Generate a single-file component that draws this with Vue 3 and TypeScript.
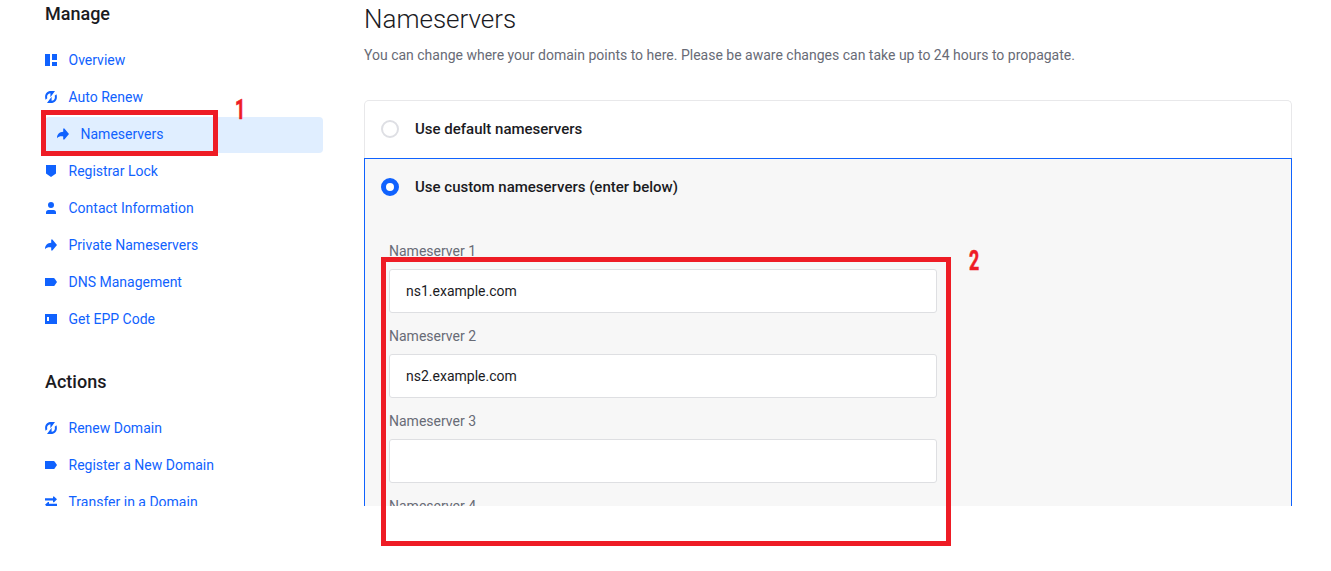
<script setup lang="ts">
type IconName = 'overview' | 'renew' | 'share' | 'shield' | 'person' | 'tag' | 'code' | 'transfer'

interface NavItem {
  label: string
  icon: IconName
  active?: boolean
}

interface NavSection {
  title: string
  items: NavItem[]
}

const icons: Record<IconName, string> = {
  overview: 'M0 0H5V12H0ZM7 0H12V6H7ZM7 8H12V12H7Z',
  renew:
    'M.6 8.7C-.9 4.6 1.2 .4 5 0H10L5.4 6.2V2.2C2.7 2.6 1.6 4.8 2.3 7.3ZM11.4 3.3C12.9 7.4 10.8 11.6 7 12H2L6.6 5.8V9.8C9.3 9.4 10.4 7.2 9.7 4.7Z',
  share: 'M6.2 .6H7.4L12 6L7.4 11.4H6.2V8.4C3.4 8 1.5 8.6 0 10.2C0 6.3 2.5 3.9 6.2 3.7Z',
  shield: 'M1 0H11V8.4L6 12L1 8.4Z',
  person: 'M6 0A3 3 0 1 1 6 6A3 3 0 1 1 6 0ZM3.5 8H8.5Q11 8 11 10.5V12H1V10.5Q1 8 3.5 8Z',
  tag: 'M0 2H8.6Q9.2 2 9.6 2.5L12 6L9.6 9.5Q9.2 10 8.6 10H0Z',
  code: 'M0 1H12V11H0ZM2 4V8H4V4Z',
  transfer: 'M0 2.3H8V.5H9L12 3.3L9 6.2H8V4.5H0ZM12 7.7H4V6H3L0 8.8L3 11.6H4V9.9H12Z',
}

const sections: NavSection[] = [
  {
    title: 'Manage',
    items: [
      { label: 'Overview', icon: 'overview' },
      { label: 'Auto Renew', icon: 'renew' },
      { label: 'Nameservers', icon: 'share', active: true },
      { label: 'Registrar Lock', icon: 'shield' },
      { label: 'Contact Information', icon: 'person' },
      { label: 'Private Nameservers', icon: 'share' },
      { label: 'DNS Management', icon: 'tag' },
      { label: 'Get EPP Code', icon: 'code' },
    ],
  },
  {
    title: 'Actions',
    items: [
      { label: 'Renew Domain', icon: 'renew' },
      { label: 'Register a New Domain', icon: 'tag' },
      { label: 'Transfer in a Domain', icon: 'transfer' },
    ],
  },
]

const fields = [
  { label: 'Nameserver 1', value: 'ns1.example.com' },
  { label: 'Nameserver 2', value: 'ns2.example.com' },
  { label: 'Nameserver 3', value: '' },
  { label: 'Nameserver 4', value: '' },
]
</script>

<template>
  <div class="canvas">
    <div class="page">
      <aside class="sidebar">
        <section v-for="section in sections" :key="section.title" class="section">
          <h2>{{ section.title }}</h2>
          <nav>
            <a v-for="item in section.items" :key="item.label" class="item" :class="{ active: item.active }">
              <svg class="icon" viewBox="0 0 12 12" aria-hidden="true">
                <path :d="icons[item.icon]" :fill-rule="item.icon === 'code' ? 'evenodd' : 'nonzero'" />
              </svg>
              <span>{{ item.label }}</span>
            </a>
          </nav>
        </section>
      </aside>

      <main class="main">
        <h1>Nameservers</h1>
        <p class="intro">
          You can change where your domain points to here. Please be aware changes can take up to 24 hours to propagate.
        </p>
        <div class="option first">
          <span class="radio"></span>
          <span class="option-label">Use default nameservers</span>
        </div>
        <div class="custom">
          <div class="option">
            <span class="radio checked"></span>
            <span class="option-label">Use custom nameservers (enter below)</span>
          </div>
          <div class="fields">
            <div v-for="field in fields" :key="field.label" class="field">
              <label>{{ field.label }}</label>
              <input type="text" :value="field.value" />
            </div>
          </div>
        </div>
      </main>
    </div>

    <div class="mark mark-nav"></div>
    <span class="step step-one">1</span>
    <div class="mark mark-fields"></div>
    <span class="step step-two">2</span>
  </div>
</template>

<style>
body {
  margin: 0;
  background: #fff;
}
</style>

<style scoped>
.canvas {
  position: relative;
  width: 1331px;
  height: 571px;
  overflow: hidden;
  font-family: Roboto, "Liberation Sans", sans-serif;
  font-size: 14px;
  color: #1b1b1f;
}
.page {
  display: flex;
  gap: 41px;
  height: 506px;
  padding-left: 45px;
  overflow: hidden;
}
.sidebar {
  flex: none;
  width: 278px;
}
.section {
  margin-bottom: 30px;
}
h2 {
  margin: 0 0 15px;
  height: 28px;
  font-size: 18px;
  line-height: 28px;
  font-weight: 500;
}
nav {
  display: flex;
  flex-direction: column;
  gap: 1px;
}
.item {
  display: flex;
  align-items: center;
  height: 36px;
  box-sizing: border-box;
  padding-bottom: 2px;
  color: #1062fe;
  border-radius: 4px;
  white-space: nowrap;
}
.item.active {
  padding-left: 12px;
  background: #e0eeff;
}
.icon {
  flex: none;
  width: 12px;
  height: 12px;
  margin-right: 11.5px;
  fill: #1062fe;
}
.main {
  flex: none;
  width: 928px;
}
h1 {
  margin: 0;
  height: 38px;
  font-size: 26px;
  line-height: 38px;
  font-weight: 300;
}
.intro {
  margin: 7px 0 35px;
  line-height: 20px;
  color: #686b76;
}
.option {
  display: flex;
  align-items: center;
  gap: 16px;
  height: 57px;
  box-sizing: border-box;
  padding: 0 0 1px 16px;
}
.option.first {
  height: 58px;
  padding-bottom: 2px;
  border: 1px solid #e8e8ea;
  border-bottom: 0;
  border-radius: 5px 5px 0 0;
}
.radio {
  width: 18px;
  height: 18px;
  box-sizing: border-box;
  border: 2px solid #dedfe4;
  border-radius: 50%;
  background: #fff;
}
.radio.checked {
  border: 5px solid #1062fe;
}
.option-label {
  font-size: 15px;
  font-weight: 500;
}
.custom {
  box-sizing: border-box;
  height: 460px;
  border: 1px solid #1062fe;
  background: #f7f7f7;
}
.fields {
  width: 548px;
  padding: 25px 0 0 24px;
}
.field {
  height: 85px;
}
label {
  display: block;
  height: 28px;
  line-height: 20px;
  color: #686b76;
}
input {
  display: block;
  width: 548px;
  height: 44px;
  box-sizing: border-box;
  padding: 0 16px;
  border: 1px solid #dedfe2;
  border-radius: 3px;
  background: #fff;
  color: #1b1b1f;
  font: inherit;
}
.mark {
  position: absolute;
  box-sizing: border-box;
  border: 5px solid #ee1c25;
}
.mark-nav {
  left: 41px;
  top: 110px;
  width: 177px;
  height: 46px;
}
.mark-fields {
  left: 381px;
  top: 257px;
  width: 570px;
  height: 289px;
}
.step {
  position: absolute;
  font-size: 27px;
  line-height: 32px;
  font-weight: 700;
  color: #ee1c25;
  -webkit-text-stroke: 0.6px #ee1c25;
  transform: scaleX(0.66);
  transform-origin: left;
}
.step-one {
  left: 235px;
  top: 94px;
}
.step-two {
  left: 968.5px;
  top: 245px;
}
</style>
